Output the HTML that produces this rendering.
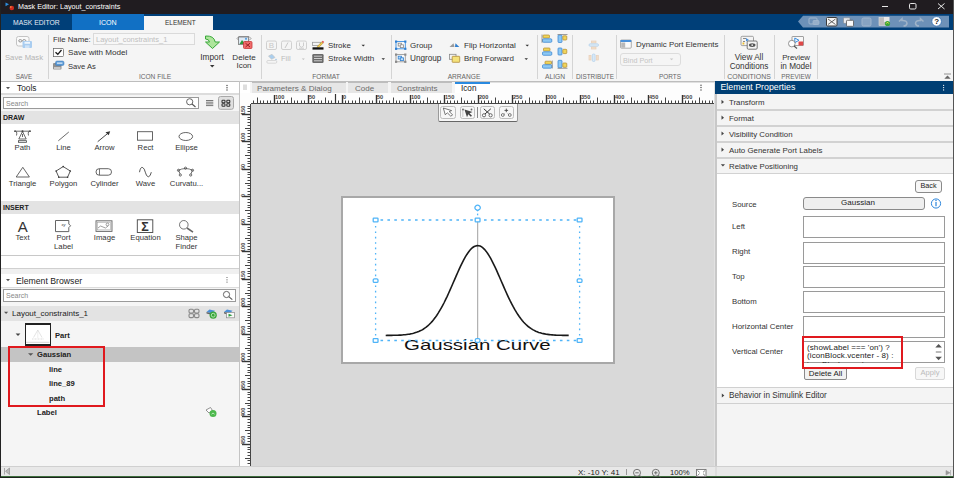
<!DOCTYPE html>
<html><head><meta charset="utf-8">
<style>
*{margin:0;padding:0;box-sizing:border-box}
html,body{width:954px;height:478px;overflow:hidden;background:#f5f5f5;font-family:"Liberation Sans",sans-serif;color:#333}
.a{position:absolute}
.t{position:absolute;white-space:nowrap;line-height:10px;height:10px;font-size:8px;margin-top:1px}
svg{position:absolute;overflow:visible}
</style></head><body>
<!-- window frame -->
<div class="a" style="left:0;top:0;width:954px;height:478px;background:#f5f5f5"></div>
<!-- title bar -->
<div class="a" style="left:0;top:0;width:954px;height:14px;background:#201c20"></div>
<div class="t" style="left:18px;top:1.5px;color:#fff;font-size:7.2px;margin-top:0">Mask Editor: Layout_constraints</div>
<!-- tab bar -->
<div class="a" style="left:0;top:14px;width:954px;height:16px;background:#003f78"></div>
<div class="a" style="left:72px;top:14px;width:72px;height:16px;background:#1170c4"></div>
<div class="a" style="left:144px;top:16px;width:69px;height:14px;background:#f5f5f5"></div>
<div class="t" style="left:13px;top:17px;color:#e8eef5;font-size:6.8px">MASK EDITOR</div>
<div class="t" style="left:99px;top:17px;color:#fff;font-size:7.1px">ICON</div>
<div class="t" style="left:165px;top:17px;color:#333;font-size:6.5px">ELEMENT</div>

<!-- toolbar -->
<div class="a" style="left:0;top:30px;width:954px;height:51px;background:#f5f5f5"></div>
<div class="a" style="left:0;top:81px;width:954px;height:1px;background:#bdbdbd"></div>


<!-- toolbar content -->
<!-- separators -->
<div class="a" style="left:48px;top:35px;width:1px;height:44px;background:#d4d4d4"></div>
<div class="a" style="left:261px;top:35px;width:1px;height:44px;background:#d4d4d4"></div>
<div class="a" style="left:391px;top:35px;width:1px;height:44px;background:#d4d4d4"></div>
<div class="a" style="left:537px;top:35px;width:1px;height:44px;background:#d4d4d4"></div>
<div class="a" style="left:572px;top:35px;width:1px;height:44px;background:#d4d4d4"></div>
<div class="a" style="left:616px;top:35px;width:1px;height:44px;background:#d4d4d4"></div>
<div class="a" style="left:724px;top:35px;width:1px;height:44px;background:#d4d4d4"></div>
<div class="a" style="left:774px;top:35px;width:1px;height:44px;background:#d4d4d4"></div>
<div class="a" style="left:817px;top:35px;width:1px;height:44px;background:#d4d4d4"></div>
<!-- section labels -->
<div class="t" style="left:4px;width:40px;text-align:center;top:72px;font-size:6.3px;color:#666;margin-top:0">SAVE</div>
<div class="t" style="left:125px;width:60px;text-align:center;top:72px;font-size:6.6px;color:#666;margin-top:0">ICON FILE</div>
<div class="t" style="left:296px;width:60px;text-align:center;top:72px;font-size:6.7px;color:#666;margin-top:0">FORMAT</div>
<div class="t" style="left:434px;width:60px;text-align:center;top:72px;font-size:6.6px;color:#666;margin-top:0">ARRANGE</div>
<div class="t" style="left:535px;width:40px;text-align:center;top:72px;font-size:6.7px;color:#666;margin-top:0">ALIGN</div>
<div class="t" style="left:570px;width:50px;text-align:center;top:72px;font-size:6.4px;color:#666;margin-top:0">DISTRIBUTE</div>
<div class="t" style="left:640px;width:60px;text-align:center;top:72px;font-size:6.4px;color:#666;margin-top:0">PORTS</div>
<div class="t" style="left:724px;width:50px;text-align:center;top:72px;font-size:6.95px;color:#666;margin-top:0">CONDITIONS</div>
<div class="t" style="left:776px;width:40px;text-align:center;top:72px;font-size:6.4px;color:#666;margin-top:0">PREVIEW</div>

<!-- SAVE -->
<div class="t" style="left:4px;width:40px;text-align:center;top:52.5px;color:#b4b4b4;font-size:7.7px;margin-top:0">Save Mask</div>
<!-- ICON FILE -->
<div class="t" style="left:53px;top:34px;font-size:7.8px">File Name:</div>
<div class="a" style="left:93px;top:33px;width:102px;height:12px;border:1px solid #dadada;background:#f7f7f7"></div>
<div class="t" style="left:96px;top:34px;font-size:7.5px;color:#c0c0c0">Layout_constraints_1</div>
<div class="a" style="left:53px;top:48px;width:10px;height:9px;border:1px solid #555;background:#fff"></div>
<div class="t" style="left:68px;top:47px;font-size:8.1px">Save with Model</div>
<div class="t" style="left:68px;top:61px;font-size:7.6px">Save As</div>
<!-- import/delete -->
<div class="t" style="left:192px;width:40px;text-align:center;top:52px;font-size:8.3px;margin-top:0">Import</div>
<div class="t" style="left:224px;width:40px;text-align:center;top:52.5px;font-size:8.1px;margin-top:0">Delete</div>
<div class="t" style="left:224px;width:40px;text-align:center;top:61px;font-size:8px;margin-top:0">Icon</div>
<!-- FORMAT -->
<div class="t" style="left:281px;top:54.3px;font-size:7.5px;color:#bbb;margin-top:0">Fill</div>
<div class="t" style="left:328px;top:41.3px;font-size:7.9px;margin-top:0">Stroke</div>
<div class="t" style="left:328px;top:54.3px;font-size:8.1px;margin-top:0">Stroke Width</div>
<!-- ARRANGE -->
<div class="t" style="left:410px;top:41.3px;font-size:8px;margin-top:0">Group</div>
<div class="t" style="left:410px;top:54.3px;font-size:8.2px;margin-top:0">Ungroup</div>
<div class="t" style="left:464px;top:41.3px;font-size:8.1px;margin-top:0">Flip Horizontal</div>
<div class="t" style="left:464px;top:54.3px;font-size:7.96px;margin-top:0">Bring Forward</div>
<!-- PORTS -->
<div class="t" style="left:636px;top:39px;font-size:7.9px">Dynamic Port Elements</div>
<div class="a" style="left:620px;top:53px;width:61px;height:13px;border:1px solid #dcdcdc;border-radius:3px;background:#f5f5f5"></div>
<div class="t" style="left:623px;top:54.5px;font-size:7.2px;color:#c4c4c4">Bind Port</div>
<!-- CONDITIONS / PREVIEW -->
<div class="t" style="left:724px;width:50px;text-align:center;top:52px;font-size:8.2px">View All</div>
<div class="t" style="left:724px;width:50px;text-align:center;top:61px;font-size:8.2px">Conditions</div>
<div class="t" style="left:776px;width:40px;text-align:center;top:52px;font-size:7.8px">Preview</div>
<div class="t" style="left:776px;width:40px;text-align:center;top:61px;font-size:8.2px">in Model</div>


<!-- left panel -->
<div class="a" style="left:1px;top:82px;width:238px;height:11px;background:#fff"></div>
<div class="a" style="left:1px;top:93px;width:238px;height:2px;background:#dcdcdc"></div>
<div class="t" style="left:17px;top:83px;font-size:8.3px;color:#222;margin-top:0">Tools</div>
<div class="a" style="left:1px;top:95px;width:238px;height:16px;background:#f5f5f5"></div>
<div class="a" style="left:3px;top:97px;width:196px;height:12px;border:1px solid #9a9a9a;background:#fff"></div>
<div class="t" style="left:6px;top:98px;font-size:7px;color:#888">Search</div>
<div class="a" style="left:1px;top:111px;width:238px;height:13px;background:#e3e3e3"></div>
<div class="t" style="left:3px;top:112px;font-size:7px;font-weight:bold;color:#222">DRAW</div>
<div class="a" style="left:1px;top:124px;width:238px;height:77px;background:#fff"></div>
<div class="a" style="left:1px;top:201px;width:238px;height:13px;background:#e3e3e3"></div>
<div class="t" style="left:3px;top:202px;font-size:7px;font-weight:bold;color:#222">INSERT</div>
<div class="a" style="left:1px;top:214px;width:238px;height:41px;background:#fff"></div>
<div class="a" style="left:1px;top:255px;width:238px;height:1px;background:#c8c8c8"></div>
<div class="a" style="left:1px;top:256px;width:238px;height:12px;background:#fff"></div>
<div class="a" style="left:1px;top:268px;width:238px;height:1px;background:#d0d0d0"></div>
<div class="a" style="left:1px;top:269px;width:238px;height:5px;background:#f0f0f0"></div>
<div class="a" style="left:1px;top:274px;width:238px;height:13px;background:#fff"></div>
<div class="a" style="left:1px;top:287px;width:238px;height:1px;background:#dcdcdc"></div>
<div class="t" style="left:16px;top:275px;font-size:8.7px;color:#222">Element Browser</div>
<!-- tool labels -->
<div class="t" style="left:2px;width:41px;text-align:center;top:143px;font-size:7.7px;margin-top:0">Path</div>
<div class="t" style="left:43px;width:41px;text-align:center;top:143px;font-size:7.7px;margin-top:0">Line</div>
<div class="t" style="left:84px;width:41px;text-align:center;top:143px;font-size:7.7px;margin-top:0">Arrow</div>
<div class="t" style="left:125px;width:41px;text-align:center;top:143px;font-size:7.7px;margin-top:0">Rect</div>
<div class="t" style="left:166px;width:41px;text-align:center;top:143px;font-size:7.7px;margin-top:0">Ellipse</div>
<div class="t" style="left:2px;width:41px;text-align:center;top:179px;font-size:7.7px;margin-top:0">Triangle</div>
<div class="t" style="left:43px;width:41px;text-align:center;top:179px;font-size:7.7px;margin-top:0">Polygon</div>
<div class="t" style="left:84px;width:41px;text-align:center;top:179px;font-size:7.7px;margin-top:0">Cylinder</div>
<div class="t" style="left:125px;width:41px;text-align:center;top:179px;font-size:7.7px;margin-top:0">Wave</div>
<div class="t" style="left:166px;width:41px;text-align:center;top:179px;font-size:7.7px;margin-top:0">Curvatu...</div>
<div class="t" style="left:2px;width:41px;text-align:center;top:232.7px;font-size:7.7px;margin-top:0">Text</div>
<div class="t" style="left:43px;width:41px;text-align:center;top:232.7px;font-size:7.7px;margin-top:0">Port</div>
<div class="t" style="left:43px;width:41px;text-align:center;top:242px;font-size:7.7px;margin-top:0">Label</div>
<div class="t" style="left:84px;width:41px;text-align:center;top:232.7px;font-size:7.7px;margin-top:0">Image</div>
<div class="t" style="left:125px;width:41px;text-align:center;top:232.7px;font-size:7.7px;margin-top:0">Equation</div>
<div class="t" style="left:166px;width:41px;text-align:center;top:232.7px;font-size:7.7px;margin-top:0">Shape</div>
<div class="t" style="left:166px;width:41px;text-align:center;top:242px;font-size:7.7px;margin-top:0">Finder</div>
<!-- element browser -->
<div class="a" style="left:1px;top:288px;width:238px;height:178px;background:#f5f5f5"></div>
<div class="a" style="left:3px;top:289px;width:233px;height:13px;border:1px solid #9a9a9a;background:#fff"></div>
<div class="t" style="left:6px;top:290px;font-size:7px;color:#888">Search</div>
<div class="a" style="left:1px;top:306px;width:238px;height:15px;background:#e3e3e3"></div>
<div class="t" style="left:12px;top:308.5px;font-size:8px;color:#222;margin-top:0">Layout_constraints_1</div>
<div class="a" style="left:24.5px;top:323.3px;width:26.5px;height:22.3px;border:1.5px solid #222;border-top-width:2px;border-bottom-width:2px;background:#fff"></div>
<div class="t" style="left:55px;top:330.5px;font-size:7.6px;font-weight:bold;color:#222;margin-top:0">Part</div>
<div class="a" style="left:1px;top:347px;width:238px;height:15px;background:#c4c4c4"></div>
<div class="t" style="left:37px;top:350px;font-size:7.6px;font-weight:bold;color:#222;margin-top:0">Gaussian</div>
<div class="t" style="left:49px;top:365px;font-size:7.6px;font-weight:bold;color:#222;margin-top:0">line</div>
<div class="t" style="left:49px;top:379px;font-size:7.6px;font-weight:bold;color:#222;margin-top:0">line_89</div>
<div class="t" style="left:49px;top:394px;font-size:7.6px;font-weight:bold;color:#222;margin-top:0">path</div>
<div class="t" style="left:37px;top:408px;font-size:7.6px;font-weight:bold;color:#222;margin-top:0">Label</div>
<div class="a" style="left:8px;top:345.5px;width:96.5px;height:61.5px;border:2px solid #e0191e"></div>
<div class="a" style="left:239px;top:81px;width:1px;height:385px;background:#c4c4c4"></div>



<!-- center -->
<div class="a" style="left:240px;top:82px;width:476px;height:384px;background:#d9d9d9"></div>
<div class="a" style="left:240px;top:82px;width:476px;height:11px;background:#f5f5f5"></div>
<div class="a" style="left:240px;top:93px;width:476px;height:11px;background:#fdfdfd"></div>
<div class="a" style="left:240px;top:104px;width:11px;height:362px;background:#fdfdfd"></div>
<div class="a" style="left:252px;top:82px;width:94px;height:11px;background:#e6e6e6;border-top:1px solid #bdbdbd"></div>
<div class="a" style="left:348px;top:82px;width:40px;height:11px;background:#e6e6e6;border-top:1px solid #bdbdbd"></div>
<div class="a" style="left:391px;top:82px;width:61px;height:11px;background:#e6e6e6;border-top:1px solid #bdbdbd"></div>
<div class="a" style="left:490px;top:82px;width:226px;height:11px;background:#fdfdfd;border-top:1px solid #e0e0e0"></div>
<div class="a" style="left:455px;top:82px;width:35px;height:11px;background:#fff;border-top:2px solid #2a8ae0"></div>
<div class="t" style="left:257px;top:83px;font-size:8.1px;color:#6a6a6a">Parameters &amp; Dialog</div>
<div class="t" style="left:355px;top:83px;font-size:8px;color:#6a6a6a">Code</div>
<div class="t" style="left:397px;top:83px;font-size:8px;color:#6a6a6a">Constraints</div>
<div class="t" style="left:461px;top:83px;font-size:8.2px;color:#222">Icon</div>
<svg class="a" style="left:0;top:0" width="954" height="478"><g stroke="#444" stroke-width="1"><line x1="253.5" y1="100.5" x2="253.5" y2="103.5"/><line x1="257.5" y1="97.5" x2="257.5" y2="103.5"/><line x1="260.5" y1="100.5" x2="260.5" y2="103.5"/><line x1="263.5" y1="100.5" x2="263.5" y2="103.5"/><line x1="267.5" y1="100.5" x2="267.5" y2="103.5"/><line x1="270.5" y1="100.5" x2="270.5" y2="103.5"/><line x1="274.5" y1="95" x2="274.5" y2="103.5" stroke-width="1.4" stroke="#333"/><line x1="277.5" y1="100.5" x2="277.5" y2="103.5"/><line x1="280.5" y1="100.5" x2="280.5" y2="103.5"/><line x1="284.5" y1="100.5" x2="284.5" y2="103.5"/><line x1="287.5" y1="100.5" x2="287.5" y2="103.5"/><line x1="291.5" y1="97.5" x2="291.5" y2="103.5"/><line x1="294.5" y1="100.5" x2="294.5" y2="103.5"/><line x1="297.5" y1="100.5" x2="297.5" y2="103.5"/><line x1="301.5" y1="100.5" x2="301.5" y2="103.5"/><line x1="304.5" y1="100.5" x2="304.5" y2="103.5"/><line x1="308.5" y1="95" x2="308.5" y2="103.5" stroke-width="1.4" stroke="#333"/><line x1="311.5" y1="100.5" x2="311.5" y2="103.5"/><line x1="314.5" y1="100.5" x2="314.5" y2="103.5"/><line x1="318.5" y1="100.5" x2="318.5" y2="103.5"/><line x1="321.5" y1="100.5" x2="321.5" y2="103.5"/><line x1="325.5" y1="97.5" x2="325.5" y2="103.5"/><line x1="328.5" y1="100.5" x2="328.5" y2="103.5"/><line x1="331.5" y1="100.5" x2="331.5" y2="103.5"/><line x1="335.5" y1="100.5" x2="335.5" y2="103.5"/><line x1="338.5" y1="100.5" x2="338.5" y2="103.5"/><line x1="342.5" y1="95" x2="342.5" y2="103.5" stroke-width="1.4" stroke="#333"/><line x1="345.5" y1="100.5" x2="345.5" y2="103.5"/><line x1="348.5" y1="100.5" x2="348.5" y2="103.5"/><line x1="352.5" y1="100.5" x2="352.5" y2="103.5"/><line x1="355.5" y1="100.5" x2="355.5" y2="103.5"/><line x1="359.5" y1="97.5" x2="359.5" y2="103.5"/><line x1="362.5" y1="100.5" x2="362.5" y2="103.5"/><line x1="365.5" y1="100.5" x2="365.5" y2="103.5"/><line x1="369.5" y1="100.5" x2="369.5" y2="103.5"/><line x1="372.5" y1="100.5" x2="372.5" y2="103.5"/><line x1="376.5" y1="95" x2="376.5" y2="103.5" stroke-width="1.4" stroke="#333"/><line x1="379.5" y1="100.5" x2="379.5" y2="103.5"/><line x1="382.5" y1="100.5" x2="382.5" y2="103.5"/><line x1="386.5" y1="100.5" x2="386.5" y2="103.5"/><line x1="389.5" y1="100.5" x2="389.5" y2="103.5"/><line x1="393.5" y1="97.5" x2="393.5" y2="103.5"/><line x1="396.5" y1="100.5" x2="396.5" y2="103.5"/><line x1="399.5" y1="100.5" x2="399.5" y2="103.5"/><line x1="403.5" y1="100.5" x2="403.5" y2="103.5"/><line x1="406.5" y1="100.5" x2="406.5" y2="103.5"/><line x1="410.5" y1="95" x2="410.5" y2="103.5" stroke-width="1.4" stroke="#333"/><line x1="413.5" y1="100.5" x2="413.5" y2="103.5"/><line x1="416.5" y1="100.5" x2="416.5" y2="103.5"/><line x1="420.5" y1="100.5" x2="420.5" y2="103.5"/><line x1="423.5" y1="100.5" x2="423.5" y2="103.5"/><line x1="427.5" y1="97.5" x2="427.5" y2="103.5"/><line x1="430.5" y1="100.5" x2="430.5" y2="103.5"/><line x1="433.5" y1="100.5" x2="433.5" y2="103.5"/><line x1="437.5" y1="100.5" x2="437.5" y2="103.5"/><line x1="440.5" y1="100.5" x2="440.5" y2="103.5"/><line x1="444.5" y1="95" x2="444.5" y2="103.5" stroke-width="1.4" stroke="#333"/><line x1="447.5" y1="100.5" x2="447.5" y2="103.5"/><line x1="450.5" y1="100.5" x2="450.5" y2="103.5"/><line x1="454.5" y1="100.5" x2="454.5" y2="103.5"/><line x1="457.5" y1="100.5" x2="457.5" y2="103.5"/><line x1="461.5" y1="97.5" x2="461.5" y2="103.5"/><line x1="464.5" y1="100.5" x2="464.5" y2="103.5"/><line x1="467.5" y1="100.5" x2="467.5" y2="103.5"/><line x1="471.5" y1="100.5" x2="471.5" y2="103.5"/><line x1="474.5" y1="100.5" x2="474.5" y2="103.5"/><line x1="478.5" y1="95" x2="478.5" y2="103.5" stroke-width="1.4" stroke="#333"/><line x1="481.5" y1="100.5" x2="481.5" y2="103.5"/><line x1="484.5" y1="100.5" x2="484.5" y2="103.5"/><line x1="488.5" y1="100.5" x2="488.5" y2="103.5"/><line x1="491.5" y1="100.5" x2="491.5" y2="103.5"/><line x1="495.5" y1="97.5" x2="495.5" y2="103.5"/><line x1="498.5" y1="100.5" x2="498.5" y2="103.5"/><line x1="501.5" y1="100.5" x2="501.5" y2="103.5"/><line x1="505.5" y1="100.5" x2="505.5" y2="103.5"/><line x1="508.5" y1="100.5" x2="508.5" y2="103.5"/><line x1="512.5" y1="95" x2="512.5" y2="103.5" stroke-width="1.4" stroke="#333"/><line x1="515.5" y1="100.5" x2="515.5" y2="103.5"/><line x1="518.5" y1="100.5" x2="518.5" y2="103.5"/><line x1="522.5" y1="100.5" x2="522.5" y2="103.5"/><line x1="525.5" y1="100.5" x2="525.5" y2="103.5"/><line x1="529.5" y1="97.5" x2="529.5" y2="103.5"/><line x1="532.5" y1="100.5" x2="532.5" y2="103.5"/><line x1="535.5" y1="100.5" x2="535.5" y2="103.5"/><line x1="539.5" y1="100.5" x2="539.5" y2="103.5"/><line x1="542.5" y1="100.5" x2="542.5" y2="103.5"/><line x1="546.5" y1="95" x2="546.5" y2="103.5" stroke-width="1.4" stroke="#333"/><line x1="549.5" y1="100.5" x2="549.5" y2="103.5"/><line x1="552.5" y1="100.5" x2="552.5" y2="103.5"/><line x1="556.5" y1="100.5" x2="556.5" y2="103.5"/><line x1="559.5" y1="100.5" x2="559.5" y2="103.5"/><line x1="563.5" y1="97.5" x2="563.5" y2="103.5"/><line x1="566.5" y1="100.5" x2="566.5" y2="103.5"/><line x1="569.5" y1="100.5" x2="569.5" y2="103.5"/><line x1="573.5" y1="100.5" x2="573.5" y2="103.5"/><line x1="576.5" y1="100.5" x2="576.5" y2="103.5"/><line x1="580.5" y1="95" x2="580.5" y2="103.5" stroke-width="1.4" stroke="#333"/><line x1="583.5" y1="100.5" x2="583.5" y2="103.5"/><line x1="586.5" y1="100.5" x2="586.5" y2="103.5"/><line x1="590.5" y1="100.5" x2="590.5" y2="103.5"/><line x1="593.5" y1="100.5" x2="593.5" y2="103.5"/><line x1="597.5" y1="97.5" x2="597.5" y2="103.5"/><line x1="600.5" y1="100.5" x2="600.5" y2="103.5"/><line x1="603.5" y1="100.5" x2="603.5" y2="103.5"/><line x1="607.5" y1="100.5" x2="607.5" y2="103.5"/><line x1="610.5" y1="100.5" x2="610.5" y2="103.5"/><line x1="614.5" y1="95" x2="614.5" y2="103.5" stroke-width="1.4" stroke="#333"/><line x1="617.5" y1="100.5" x2="617.5" y2="103.5"/><line x1="620.5" y1="100.5" x2="620.5" y2="103.5"/><line x1="624.5" y1="100.5" x2="624.5" y2="103.5"/><line x1="627.5" y1="100.5" x2="627.5" y2="103.5"/><line x1="631.5" y1="97.5" x2="631.5" y2="103.5"/><line x1="634.5" y1="100.5" x2="634.5" y2="103.5"/><line x1="637.5" y1="100.5" x2="637.5" y2="103.5"/><line x1="641.5" y1="100.5" x2="641.5" y2="103.5"/><line x1="644.5" y1="100.5" x2="644.5" y2="103.5"/><line x1="648.5" y1="95" x2="648.5" y2="103.5" stroke-width="1.4" stroke="#333"/><line x1="651.5" y1="100.5" x2="651.5" y2="103.5"/><line x1="654.5" y1="100.5" x2="654.5" y2="103.5"/><line x1="658.5" y1="100.5" x2="658.5" y2="103.5"/><line x1="661.5" y1="100.5" x2="661.5" y2="103.5"/><line x1="665.5" y1="97.5" x2="665.5" y2="103.5"/><line x1="668.5" y1="100.5" x2="668.5" y2="103.5"/><line x1="671.5" y1="100.5" x2="671.5" y2="103.5"/><line x1="675.5" y1="100.5" x2="675.5" y2="103.5"/><line x1="678.5" y1="100.5" x2="678.5" y2="103.5"/><line x1="682.5" y1="95" x2="682.5" y2="103.5" stroke-width="1.4" stroke="#333"/><line x1="685.5" y1="100.5" x2="685.5" y2="103.5"/><line x1="688.5" y1="100.5" x2="688.5" y2="103.5"/><line x1="692.5" y1="100.5" x2="692.5" y2="103.5"/><line x1="695.5" y1="100.5" x2="695.5" y2="103.5"/><line x1="699.5" y1="97.5" x2="699.5" y2="103.5"/><line x1="702.5" y1="100.5" x2="702.5" y2="103.5"/><line x1="705.5" y1="100.5" x2="705.5" y2="103.5"/><line x1="709.5" y1="100.5" x2="709.5" y2="103.5"/><line x1="712.5" y1="100.5" x2="712.5" y2="103.5"/><line x1="716.5" y1="95" x2="716.5" y2="103.5" stroke-width="1.4" stroke="#333"/><line x1="251" y1="103.5" x2="716" y2="103.5"/></g><g font-family="Liberation Sans" font-size="5.6" font-weight="bold" fill="#444"><text x="275" y="99">100</text><text x="309" y="99">50</text><text x="343" y="99">0</text><text x="377" y="99">50</text><text x="411" y="99">100</text><text x="445" y="99">150</text><text x="479" y="99">200</text><text x="513" y="99">250</text><text x="547" y="99">300</text><text x="581" y="99">350</text><text x="615" y="99">400</text><text x="649" y="99">450</text><text x="683" y="99">500</text></g><g stroke="#444" stroke-width="1"><line x1="247.5" y1="106.5" x2="250.5" y2="106.5"/><line x1="247.5" y1="108.5" x2="250.5" y2="108.5"/><line x1="247.5" y1="111.5" x2="250.5" y2="111.5"/><line x1="242" y1="114.5" x2="250.5" y2="114.5" stroke-width="1.4" stroke="#333"/><line x1="247.5" y1="117.5" x2="250.5" y2="117.5"/><line x1="247.5" y1="119.5" x2="250.5" y2="119.5"/><line x1="247.5" y1="122.5" x2="250.5" y2="122.5"/><line x1="247.5" y1="125.5" x2="250.5" y2="125.5"/><line x1="245" y1="128.5" x2="250.5" y2="128.5"/><line x1="247.5" y1="130.5" x2="250.5" y2="130.5"/><line x1="247.5" y1="133.5" x2="250.5" y2="133.5"/><line x1="247.5" y1="136.5" x2="250.5" y2="136.5"/><line x1="247.5" y1="139.5" x2="250.5" y2="139.5"/><line x1="242" y1="141.5" x2="250.5" y2="141.5" stroke-width="1.4" stroke="#333"/><line x1="247.5" y1="144.5" x2="250.5" y2="144.5"/><line x1="247.5" y1="147.5" x2="250.5" y2="147.5"/><line x1="247.5" y1="150.5" x2="250.5" y2="150.5"/><line x1="247.5" y1="152.5" x2="250.5" y2="152.5"/><line x1="245" y1="155.5" x2="250.5" y2="155.5"/><line x1="247.5" y1="158.5" x2="250.5" y2="158.5"/><line x1="247.5" y1="161.5" x2="250.5" y2="161.5"/><line x1="247.5" y1="163.5" x2="250.5" y2="163.5"/><line x1="247.5" y1="166.5" x2="250.5" y2="166.5"/><line x1="242" y1="169.5" x2="250.5" y2="169.5" stroke-width="1.4" stroke="#333"/><line x1="247.5" y1="172.5" x2="250.5" y2="172.5"/><line x1="247.5" y1="174.5" x2="250.5" y2="174.5"/><line x1="247.5" y1="177.5" x2="250.5" y2="177.5"/><line x1="247.5" y1="180.5" x2="250.5" y2="180.5"/><line x1="245" y1="183.5" x2="250.5" y2="183.5"/><line x1="247.5" y1="185.5" x2="250.5" y2="185.5"/><line x1="247.5" y1="188.5" x2="250.5" y2="188.5"/><line x1="247.5" y1="191.5" x2="250.5" y2="191.5"/><line x1="247.5" y1="194.5" x2="250.5" y2="194.5"/><line x1="242" y1="196.5" x2="250.5" y2="196.5" stroke-width="1.4" stroke="#333"/><line x1="247.5" y1="199.5" x2="250.5" y2="199.5"/><line x1="247.5" y1="202.5" x2="250.5" y2="202.5"/><line x1="247.5" y1="205.5" x2="250.5" y2="205.5"/><line x1="247.5" y1="207.5" x2="250.5" y2="207.5"/><line x1="245" y1="210.5" x2="250.5" y2="210.5"/><line x1="247.5" y1="213.5" x2="250.5" y2="213.5"/><line x1="247.5" y1="216.5" x2="250.5" y2="216.5"/><line x1="247.5" y1="218.5" x2="250.5" y2="218.5"/><line x1="247.5" y1="221.5" x2="250.5" y2="221.5"/><line x1="242" y1="224.5" x2="250.5" y2="224.5" stroke-width="1.4" stroke="#333"/><line x1="247.5" y1="227.5" x2="250.5" y2="227.5"/><line x1="247.5" y1="229.5" x2="250.5" y2="229.5"/><line x1="247.5" y1="232.5" x2="250.5" y2="232.5"/><line x1="247.5" y1="235.5" x2="250.5" y2="235.5"/><line x1="245" y1="238.5" x2="250.5" y2="238.5"/><line x1="247.5" y1="240.5" x2="250.5" y2="240.5"/><line x1="247.5" y1="243.5" x2="250.5" y2="243.5"/><line x1="247.5" y1="246.5" x2="250.5" y2="246.5"/><line x1="247.5" y1="249.5" x2="250.5" y2="249.5"/><line x1="242" y1="251.5" x2="250.5" y2="251.5" stroke-width="1.4" stroke="#333"/><line x1="247.5" y1="254.5" x2="250.5" y2="254.5"/><line x1="247.5" y1="257.5" x2="250.5" y2="257.5"/><line x1="247.5" y1="260.5" x2="250.5" y2="260.5"/><line x1="247.5" y1="262.5" x2="250.5" y2="262.5"/><line x1="245" y1="265.5" x2="250.5" y2="265.5"/><line x1="247.5" y1="268.5" x2="250.5" y2="268.5"/><line x1="247.5" y1="271.5" x2="250.5" y2="271.5"/><line x1="247.5" y1="273.5" x2="250.5" y2="273.5"/><line x1="247.5" y1="276.5" x2="250.5" y2="276.5"/><line x1="242" y1="279.5" x2="250.5" y2="279.5" stroke-width="1.4" stroke="#333"/><line x1="247.5" y1="282.5" x2="250.5" y2="282.5"/><line x1="247.5" y1="284.5" x2="250.5" y2="284.5"/><line x1="247.5" y1="287.5" x2="250.5" y2="287.5"/><line x1="247.5" y1="290.5" x2="250.5" y2="290.5"/><line x1="245" y1="293.5" x2="250.5" y2="293.5"/><line x1="247.5" y1="295.5" x2="250.5" y2="295.5"/><line x1="247.5" y1="298.5" x2="250.5" y2="298.5"/><line x1="247.5" y1="301.5" x2="250.5" y2="301.5"/><line x1="247.5" y1="304.5" x2="250.5" y2="304.5"/><line x1="242" y1="306.5" x2="250.5" y2="306.5" stroke-width="1.4" stroke="#333"/><line x1="247.5" y1="309.5" x2="250.5" y2="309.5"/><line x1="247.5" y1="312.5" x2="250.5" y2="312.5"/><line x1="247.5" y1="315.5" x2="250.5" y2="315.5"/><line x1="247.5" y1="317.5" x2="250.5" y2="317.5"/><line x1="245" y1="320.5" x2="250.5" y2="320.5"/><line x1="247.5" y1="323.5" x2="250.5" y2="323.5"/><line x1="247.5" y1="326.5" x2="250.5" y2="326.5"/><line x1="247.5" y1="328.5" x2="250.5" y2="328.5"/><line x1="247.5" y1="331.5" x2="250.5" y2="331.5"/><line x1="242" y1="334.5" x2="250.5" y2="334.5" stroke-width="1.4" stroke="#333"/><line x1="247.5" y1="337.5" x2="250.5" y2="337.5"/><line x1="247.5" y1="339.5" x2="250.5" y2="339.5"/><line x1="247.5" y1="342.5" x2="250.5" y2="342.5"/><line x1="247.5" y1="345.5" x2="250.5" y2="345.5"/><line x1="245" y1="348.5" x2="250.5" y2="348.5"/><line x1="247.5" y1="350.5" x2="250.5" y2="350.5"/><line x1="247.5" y1="353.5" x2="250.5" y2="353.5"/><line x1="247.5" y1="356.5" x2="250.5" y2="356.5"/><line x1="247.5" y1="359.5" x2="250.5" y2="359.5"/><line x1="242" y1="361.5" x2="250.5" y2="361.5" stroke-width="1.4" stroke="#333"/><line x1="247.5" y1="364.5" x2="250.5" y2="364.5"/><line x1="247.5" y1="367.5" x2="250.5" y2="367.5"/><line x1="247.5" y1="370.5" x2="250.5" y2="370.5"/><line x1="247.5" y1="372.5" x2="250.5" y2="372.5"/><line x1="245" y1="375.5" x2="250.5" y2="375.5"/><line x1="247.5" y1="378.5" x2="250.5" y2="378.5"/><line x1="247.5" y1="381.5" x2="250.5" y2="381.5"/><line x1="247.5" y1="383.5" x2="250.5" y2="383.5"/><line x1="247.5" y1="386.5" x2="250.5" y2="386.5"/><line x1="242" y1="389.5" x2="250.5" y2="389.5" stroke-width="1.4" stroke="#333"/><line x1="247.5" y1="392.5" x2="250.5" y2="392.5"/><line x1="247.5" y1="394.5" x2="250.5" y2="394.5"/><line x1="247.5" y1="397.5" x2="250.5" y2="397.5"/><line x1="247.5" y1="400.5" x2="250.5" y2="400.5"/><line x1="245" y1="403.5" x2="250.5" y2="403.5"/><line x1="247.5" y1="405.5" x2="250.5" y2="405.5"/><line x1="247.5" y1="408.5" x2="250.5" y2="408.5"/><line x1="247.5" y1="411.5" x2="250.5" y2="411.5"/><line x1="247.5" y1="414.5" x2="250.5" y2="414.5"/><line x1="242" y1="416.5" x2="250.5" y2="416.5" stroke-width="1.4" stroke="#333"/><line x1="247.5" y1="419.5" x2="250.5" y2="419.5"/><line x1="247.5" y1="422.5" x2="250.5" y2="422.5"/><line x1="247.5" y1="425.5" x2="250.5" y2="425.5"/><line x1="247.5" y1="427.5" x2="250.5" y2="427.5"/><line x1="245" y1="430.5" x2="250.5" y2="430.5"/><line x1="247.5" y1="433.5" x2="250.5" y2="433.5"/><line x1="247.5" y1="436.5" x2="250.5" y2="436.5"/><line x1="247.5" y1="438.5" x2="250.5" y2="438.5"/><line x1="247.5" y1="441.5" x2="250.5" y2="441.5"/><line x1="242" y1="444.5" x2="250.5" y2="444.5" stroke-width="1.4" stroke="#333"/><line x1="247.5" y1="447.5" x2="250.5" y2="447.5"/><line x1="247.5" y1="449.5" x2="250.5" y2="449.5"/><line x1="247.5" y1="452.5" x2="250.5" y2="452.5"/><line x1="247.5" y1="455.5" x2="250.5" y2="455.5"/><line x1="245" y1="458.5" x2="250.5" y2="458.5"/><line x1="247.5" y1="460.5" x2="250.5" y2="460.5"/><line x1="247.5" y1="463.5" x2="250.5" y2="463.5"/><line x1="247.5" y1="466.5" x2="250.5" y2="466.5"/><line x1="250.5" y1="104" x2="250.5" y2="466"/></g><g font-family="Liberation Sans" font-size="5.6" font-weight="bold" fill="#444"><text transform="translate(245,115) rotate(-90)">150</text><text transform="translate(245,142) rotate(-90)">100</text><text transform="translate(245,170) rotate(-90)">50</text><text transform="translate(245,197) rotate(-90)">0</text><text transform="translate(245,225) rotate(-90)">50</text><text transform="translate(245,252) rotate(-90)">100</text><text transform="translate(245,280) rotate(-90)">150</text><text transform="translate(245,307) rotate(-90)">200</text><text transform="translate(245,335) rotate(-90)">250</text><text transform="translate(245,362) rotate(-90)">300</text><text transform="translate(245,390) rotate(-90)">350</text><text transform="translate(245,417) rotate(-90)">400</text><text transform="translate(245,445) rotate(-90)">450</text></g></svg>
<!-- floating toolbar -->
<div class="a" style="left:438px;top:103.5px;width:80px;height:18.5px;background:#f7f7f7;border:1px solid #9a9a9a;border-top:none;border-bottom:1.5px solid #666;border-radius:0 0 2px 2px"></div>
<div class="a" style="left:440px;top:106px;width:16px;height:13px;border:1px solid #bdbdbd;border-radius:2.5px"></div>
<div class="a" style="left:460px;top:106px;width:15px;height:13px;border:1px solid #bdbdbd;border-radius:2.5px"></div>
<div class="a" style="left:477px;top:107px;width:1px;height:11px;background:#888"></div>
<div class="a" style="left:480px;top:106px;width:15px;height:13px;border:1px solid #bdbdbd;border-radius:2.5px"></div>
<div class="a" style="left:499px;top:106px;width:15px;height:13px;border:1px solid #bdbdbd;border-radius:2.5px"></div>
<!-- icon canvas -->
<div class="a" style="left:341px;top:196px;width:274px;height:168px;background:#fff;border:2px solid #a8a8a8"></div>
<svg class="a" style="left:0;top:0" width="954" height="478">
<line x1="477.7" y1="220" x2="477.7" y2="340" stroke="#a0a0a0" stroke-width="1"/>
<path d="M385.7,335.5 L387.2,335.4 L388.7,335.4 L390.2,335.4 L391.7,335.4 L393.2,335.3 L394.7,335.3 L396.2,335.3 L397.7,335.2 L399.2,335.1 L400.7,335.1 L402.2,335.0 L403.7,334.8 L405.2,334.7 L406.7,334.5 L408.2,334.3 L409.7,334.1 L411.2,333.8 L412.7,333.5 L414.2,333.1 L415.7,332.6 L417.2,332.1 L418.7,331.5 L420.2,330.8 L421.7,330.1 L423.2,329.2 L424.7,328.2 L426.2,327.1 L427.7,325.9 L429.2,324.5 L430.7,323.0 L432.2,321.4 L433.7,319.6 L435.2,317.6 L436.7,315.5 L438.2,313.2 L439.7,310.7 L441.2,308.1 L442.7,305.4 L444.2,302.5 L445.7,299.4 L447.2,296.3 L448.7,293.0 L450.2,289.7 L451.7,286.3 L453.2,282.8 L454.7,279.4 L456.2,275.9 L457.7,272.5 L459.2,269.2 L460.7,265.9 L462.2,262.8 L463.7,259.9 L465.2,257.2 L466.7,254.7 L468.2,252.5 L469.7,250.5 L471.2,248.8 L472.7,247.5 L474.2,246.5 L475.7,245.9 L477.2,245.6 L478.7,245.7 L480.2,246.1 L481.7,246.9 L483.2,248.1 L484.7,249.6 L486.2,251.4 L487.7,253.5 L489.2,255.8 L490.7,258.4 L492.2,261.3 L493.7,264.3 L495.2,267.4 L496.7,270.7 L498.2,274.1 L499.7,277.5 L501.2,281.0 L502.7,284.4 L504.2,287.9 L505.7,291.3 L507.2,294.6 L508.7,297.8 L510.2,300.9 L511.7,303.8 L513.2,306.7 L514.7,309.4 L516.2,311.9 L517.7,314.3 L519.2,316.5 L520.7,318.5 L522.2,320.4 L523.7,322.2 L525.2,323.7 L526.7,325.2 L528.2,326.5 L529.7,327.6 L531.2,328.7 L532.7,329.6 L534.2,330.4 L535.7,331.2 L537.2,331.8 L538.7,332.4 L540.2,332.8 L541.7,333.3 L543.2,333.6 L544.7,333.9 L546.2,334.2 L547.7,334.4 L549.2,334.6 L550.7,334.8 L552.2,334.9 L553.7,335.0 L555.2,335.1 L556.7,335.2 L558.2,335.2 L559.7,335.3 L561.2,335.3 L562.7,335.4 L564.2,335.4 L565.7,335.4 L567.2,335.4 L568.7,335.4" fill="none" stroke="#1a1a1a" stroke-width="1.6"/>
</svg>
<div class="t" style="left:404.3px;top:337.3px;font-size:14.3px;line-height:17px;height:17px;color:#111;transform:scaleX(1.43);margin-top:0;transform-origin:0 0">Gaussian Curve</div>
<svg class="a" style="left:0;top:0" width="954" height="478">
<g stroke="#4fb4f8" stroke-width="1.3" fill="none">
<line x1="378.5" y1="220" x2="576.5" y2="220" stroke-dasharray="2.6 4.3" stroke-dashoffset="-2"/>
<line x1="378.5" y1="340.5" x2="576.5" y2="340.5" stroke-dasharray="2.6 4.3" stroke-dashoffset="-2"/>
<line x1="375.6" y1="224" x2="375.6" y2="337" stroke-dasharray="1.6 3.8" stroke-dashoffset="-2"/>
<line x1="579.6" y1="224" x2="579.6" y2="337" stroke-dasharray="1.6 3.8" stroke-dashoffset="-2"/>
<line x1="477.6" y1="213.6" x2="477.6" y2="215.3"/>
</g>
<g stroke="#4fb4f8" stroke-width="1.3" fill="#fff">
<rect x="373.2" y="218.2" width="4.8" height="3.6" rx="0.6"/><rect x="475.2" y="218.2" width="4.8" height="3.6" rx="0.6"/><rect x="577.2" y="218.2" width="4.8" height="3.6" rx="0.6"/>
<rect x="373.2" y="278.8" width="4.8" height="3.6" rx="1.2"/><rect x="577.2" y="278.8" width="4.8" height="3.6" rx="1.2"/>
<rect x="373.2" y="338.7" width="4.8" height="3.6" rx="0.6"/><rect x="475.2" y="338.7" width="4.8" height="3.6" rx="1.6"/><rect x="577.2" y="338.7" width="4.8" height="3.6" rx="0.6"/>
<path d="M477.6,210.6 L475.6,209.3 A2.7,2.4 0 1 1 479.6,209.3 Z"/>
</g>
</svg>



<!-- right panel -->
<div class="a" style="left:716px;top:82px;width:237px;height:384px;background:#f4f4f4"></div>
<div class="a" style="left:714px;top:82px;width:1px;height:384px;background:#e2e2e2"></div><div class="a" style="left:715px;top:82px;width:2px;height:384px;background:#c8c8c8"></div>
<div class="a" style="left:715px;top:81px;width:238px;height:13px;background:#003f74"></div>
<div class="t" style="left:720.5px;top:82.3px;font-size:8.8px;color:#fff;margin-top:0">Element Properties</div>
<div class="a" style="left:717px;top:94px;width:236px;height:80px;background:#f4f4f4"></div>
<div class="a" style="left:717px;top:109px;width:236px;height:1.5px;background:#d2d2d2"></div>
<div class="a" style="left:717px;top:125px;width:236px;height:1.5px;background:#d2d2d2"></div>
<div class="a" style="left:717px;top:141px;width:236px;height:1.5px;background:#d2d2d2"></div>
<div class="a" style="left:717px;top:157px;width:236px;height:1.5px;background:#d2d2d2"></div>
<div class="a" style="left:717px;top:173px;width:236px;height:1.5px;background:#d2d2d2"></div>
<div class="t" style="left:729px;top:97px;font-size:7.85px">Transform</div>
<div class="t" style="left:729px;top:113px;font-size:7.85px">Format</div>
<div class="t" style="left:729px;top:128.5px;font-size:7.85px">Visibility Condition</div>
<div class="t" style="left:729px;top:145px;font-size:7.9px">Auto Generate Port Labels</div>
<div class="t" style="left:729px;top:160.5px;font-size:7.85px">Relative Positioning</div>
<div class="a" style="left:717px;top:174px;width:236px;height:213px;background:#fff"></div>
<div class="a" style="left:915px;top:180px;width:27px;height:13px;border:1px solid #8a8a8a;border-radius:3px;background:#f7f7f7"></div>
<div class="t" style="left:915px;top:181px;width:27px;text-align:center;font-size:7.2px;color:#222;margin-top:0">Back</div>
<div class="t" style="left:732px;top:199.5px;font-size:7.8px;margin-top:0">Source</div>
<div class="a" style="left:803px;top:197px;width:122px;height:13px;border:1px solid #8a8a8a;border-radius:3px;background:#efefef"></div>
<div class="t" style="left:797px;top:197.5px;width:122px;text-align:center;font-size:8px;color:#222;margin-top:0">Gaussian</div>
<div class="a" style="left:803px;top:216px;width:142px;height:22px;border:1px solid #9a9a9a;background:#fff"></div>
<div class="a" style="left:803px;top:241.5px;width:142px;height:22px;border:1px solid #9a9a9a;background:#fff"></div>
<div class="a" style="left:803px;top:266px;width:142px;height:22px;border:1px solid #9a9a9a;background:#fff"></div>
<div class="a" style="left:803px;top:291px;width:142px;height:22px;border:1px solid #9a9a9a;background:#fff"></div>
<div class="a" style="left:803px;top:316px;width:142px;height:22px;border:1px solid #9a9a9a;background:#fff"></div>
<div class="a" style="left:803px;top:341px;width:142px;height:22px;border:1px solid #9a9a9a;background:#fff"></div>
<div class="t" style="left:732px;top:221.5px;font-size:7.8px;margin-top:0">Left</div>
<div class="t" style="left:732px;top:246.5px;font-size:7.8px;margin-top:0">Right</div>
<div class="t" style="left:732px;top:271.5px;font-size:7.8px;margin-top:0">Top</div>
<div class="t" style="left:732px;top:296.5px;font-size:7.8px;margin-top:0">Bottom</div>
<div class="t" style="left:732px;top:321.5px;font-size:7.9px;margin-top:0">Horizontal Center</div>
<div class="t" style="left:732px;top:346.5px;font-size:7.8px;margin-top:0">Vertical Center</div>
<div class="a" style="left:804px;top:342px;width:130px;height:20.5px;overflow:hidden">
<div class="t" style="left:3px;top:1.5px;font-size:8px;color:#222;line-height:8.7px;height:auto;margin-top:0;letter-spacing:0.1px">(showLabel === 'on') ?<br>(iconBlock.vcenter - 8) :<br>iconBlock.vcenter</div>
</div>
<div class="a" style="left:804px;top:367px;width:43px;height:13px;border:1px solid #8a8a8a;border-radius:2px;background:#f2f2f2"></div>
<div class="t" style="left:804px;top:368.8px;width:43px;text-align:center;font-size:7.9px;color:#222;margin-top:0">Delete All</div>
<div class="a" style="left:915px;top:367px;width:30px;height:13px;border:1px solid #d8d8d8;border-radius:2px;background:#f7f7f7"></div>
<div class="t" style="left:915px;top:368px;width:30px;text-align:center;font-size:7.6px;color:#bbb;margin-top:0">Apply</div>
<div class="a" style="left:802px;top:336px;width:101px;height:33px;border:2px solid #e0191e"></div>
<div class="a" style="left:717px;top:387px;width:236px;height:1px;background:#d0d0d0"></div>
<div class="a" style="left:717px;top:388px;width:236px;height:15px;background:#f4f4f4"></div>
<div class="a" style="left:717px;top:403px;width:236px;height:1px;background:#d0d0d0"></div>
<div class="t" style="left:729px;top:390.5px;font-size:8.2px;margin-top:0">Behavior in Simulink Editor</div>
<div class="a" style="left:717px;top:404px;width:236px;height:62px;background:#f4f4f4"></div>


<!-- status bar -->
<div class="a" style="left:0;top:466px;width:954px;height:10px;background:#e8e8e8;border-top:1px solid #d0d0d0"></div>
<div class="t" style="left:578px;top:467.5px;font-size:8px;color:#222;margin-top:0">X: -10 Y: 41</div>
<div class="a" style="left:626px;top:469px;width:1px;height:6px;background:#999"></div>
<div class="t" style="left:670px;top:467.5px;font-size:7.7px;color:#222;margin-top:0">100%</div>

<div class="a" style="left:0;top:476px;width:954px;height:2px;background:linear-gradient(#3d6e3d 0,#3d6e3d 40%,#1a221a 60%)"></div>

<!-- ICONS overlay -->
<svg class="a" style="left:0;top:0" width="954" height="478">
<!-- title icon -->
<path d="M5.5,2.5 L9,4.3 L5.5,6.2 Z" fill="#2d8fe0"/>
<circle cx="11.8" cy="8" r="2.3" fill="#d42a1e"/>
<circle cx="10.8" cy="7" r="0.9" fill="#f07a3a"/>
<!-- window controls -->
<line x1="882" y1="6.5" x2="888" y2="6.5" stroke="#e8e8e8" stroke-width="1"/>
<rect x="909.5" y="3.5" width="6.5" height="5.5" rx="1.2" fill="none" stroke="#e8e8e8" stroke-width="1"/>
<path d="M938,3.5 L944.5,9 M944.5,3.5 L938,9" stroke="#e8e8e8" stroke-width="1"/>
<!-- quick access bar -->
<path d="M798,21.5 L803,15.8 L949,15.8 L949,27.6 L803,27.6 Z" fill="#6d91b8"/>
<g opacity="0.55">
<rect x="809" y="18" width="8" height="6" rx="1" fill="none" stroke="#cfd8e2" stroke-width="1"/>
<rect x="813" y="20.5" width="6" height="4" rx="1" fill="#b9c9da" stroke="#cfd8e2" stroke-width="0.8"/>
</g>
<rect x="826.5" y="17.5" width="10.5" height="8.5" rx="1" fill="#f4f4f4" stroke="#3a3a3a" stroke-width="1"/>
<path d="M828,19 L835.5,24.5 M835.5,19 L828,24.5" stroke="#555" stroke-width="0.9"/>
<rect x="843.5" y="17.8" width="6.5" height="5.5" rx="0.8" fill="#e6e9ee" stroke="#888" stroke-width="0.6"/>
<rect x="846.5" y="20.3" width="7" height="6" rx="0.8" fill="#fafafa" stroke="#555" stroke-width="0.8"/>
<g opacity="0.5"><rect x="862" y="18" width="9" height="8" rx="1.5" fill="#9fb5cc" stroke="#d0d8e0" stroke-width="1"/></g>
<rect x="879" y="17.5" width="9" height="8" fill="#bdbdbd" stroke="#e0e0e0" stroke-width="0.6"/>
<rect x="884" y="17" width="5.5" height="5" fill="#e8e8e8"/>
<circle cx="887.5" cy="23.5" r="2.6" fill="#3aa63a"/>
<path d="M886.3,23.5 L887.5,22.2 L888.7,23.5" stroke="#ffe04a" stroke-width="1" fill="none"/>
<path d="M899,21.5 L902,18.8 L902,20.5 Q907,20.2 907,23.5 Q906.5,26 903.5,26" fill="none" stroke="#9fb3c8" stroke-width="1.5"/>
<path d="M923.5,21.5 L920.5,18.8 L920.5,20.5 Q915.5,20.2 915.5,23.5 Q916,26 919,26" fill="none" stroke="#9fb3c8" stroke-width="1.5"/>
<circle cx="936.6" cy="21.4" r="4.8" fill="#ffffff" stroke="#2f6fb4" stroke-width="0.8"/>
<text x="936.6" y="24.4" font-family="Liberation Sans" font-weight="bold" font-size="8" text-anchor="middle" fill="#222">?</text>
</svg>


<!-- TOOLBAR ICONS -->
<svg class="a" style="left:0;top:0" width="954" height="478">
<!-- save mask -->
<rect x="16.5" y="36.5" width="12.5" height="9.5" rx="2" fill="#fafafa" stroke="#c4c4c4" stroke-width="1"/>
<ellipse cx="20.3" cy="40.8" rx="1.6" ry="1.2" fill="none" stroke="#8a8a8a" stroke-width="0.9"/><ellipse cx="24.2" cy="40.8" rx="1.6" ry="1.2" fill="none" stroke="#8a8a8a" stroke-width="0.9"/>
<rect x="22.5" y="41" width="9.5" height="7" rx="1" fill="#a9cdf0"/>
<rect x="24.5" y="41.8" width="5.5" height="2" fill="#eef6fd"/>
<rect x="25" y="45.3" width="4.5" height="2.7" fill="#cfe3f7"/>
<!-- checkbox -->
<rect x="53.5" y="48.5" width="10" height="8" rx="1" fill="#fff" stroke="#8a8a8a" stroke-width="1"/>
<path d="M55.5,52.2 L57.8,54.3 L61.5,50" fill="none" stroke="#1a1a1a" stroke-width="1.3"/>
<!-- save as -->
<rect x="53" y="63" width="8.5" height="6.5" rx="1" fill="#8f8f8f"/>
<rect x="54" y="67" width="6.5" height="2.5" fill="#c8c8c8"/>
<rect x="55.5" y="61" width="8.5" height="4.5" rx="1.5" fill="#5b9ad6" stroke="#3c78b8" stroke-width="0.5"/>
<rect x="57" y="62.5" width="5.5" height="1.3" fill="#d8e8f8"/>
<!-- import arrow -->
<path d="M205.5,36 Q214,35.5 215.2,42 L219.5,42 L212.5,48.5 L205.5,42 L209.5,42 Q209,39 205.5,39 Z" fill="#aee59c" stroke="#38a83a" stroke-width="1"/>
<path d="M210,65 L214.5,65 L212.2,67.5 Z" fill="#333"/>
<!-- delete icon -->
<path d="M237,38.5 L239,36.5 L249,36.5 L251,38.5 L249,40.5 L239,40.5 Z" fill="#e8e8e8" stroke="#888" stroke-width="0.8"/>
<rect x="238.5" y="37" width="10" height="7.5" fill="#dfeaf5" stroke="#777" stroke-width="0.8"/>
<path d="M239.5,44 L242,40 L244,42.5 L245.5,41 L247.5,44 Z" fill="#2e9a3e"/>
<circle cx="246" cy="38.8" r="1.1" fill="#5aa0e0"/>
<rect x="243.5" y="41.5" width="8.5" height="7" rx="1" fill="#f06b6b" stroke="#c63a3a" stroke-width="0.8"/>
<path d="M245.5,43.2 L250,47 M250,43.2 L245.5,47" stroke="#8b1c1c" stroke-width="0.9"/>
<!-- B I U -->
<g fill="none" stroke="#d0d0d0" stroke-width="1">
<rect x="266.5" y="41" width="10" height="8.5" rx="1.5"/>
<rect x="281.5" y="41" width="10" height="8.5" rx="1.5"/>
<rect x="296.5" y="41" width="10" height="8.5" rx="1.5"/>
</g>
<text x="271.5" y="48.3" font-family="Liberation Sans" font-size="8" text-anchor="middle" fill="#c8c8c8">B</text>
<path d="M288,42.5 L285,48" stroke="#c8c8c8" stroke-width="1"/>
<path d="M299.5,42.5 V46 Q301.5,48.5 303.5,46 V42.5 M299,48.2 h5" fill="none" stroke="#c8c8c8" stroke-width="0.9"/>
<!-- stroke -->
<rect x="312.5" y="42.3" width="8" height="3.2" fill="#f3f3f3" stroke="#9a9a9a" stroke-width="0.8"/>
<path d="M317.5,46.3 L321.8,41.8 L323.2,43 L318.9,47.3 L317.2,47.5 Z" fill="#f2cd4c" stroke="#9a7a2a" stroke-width="0.5"/>
<path d="M321.8,41.8 L322.8,40.8 L324.2,42 L323.2,43 Z" fill="#e04848"/>
<rect x="312.5" y="47.3" width="11" height="2.3" fill="#111"/>
<!-- fill -->
<g opacity="0.55">
<path d="M268.5,56 L272,54.3 L275,57.5 L271.5,59.3 Z" fill="#6cb0ea" stroke="#999" stroke-width="0.6"/>
<circle cx="276" cy="59.5" r="0.8" fill="#5aa0e0"/>
<rect x="266.8" y="60.5" width="10" height="2.7" rx="1.3" fill="none" stroke="#aaa" stroke-width="0.7"/>
</g>
<path d="M301.8,58.5 L304.8,58.5 L303.3,60 Z" fill="#c0c0c0"/>
<path d="M361.5,44.8 L365,44.8 L363.25,46.6 Z" fill="#333"/>
<path d="M381.5,58.3 L385,58.3 L383.25,60.1 Z" fill="#333"/>
<!-- stroke width -->
<rect x="312.3" y="54" width="11.3" height="9" rx="1.3" fill="#6a6a6a"/>
<path d="M314,56.2 h8 M314,58.5 h8 M314,60.8 h8" stroke="#d8d8d8" stroke-width="0.9"/>
<!-- group -->
<rect x="396" y="41.5" width="9.3" height="7.3" fill="#f8f8f8" stroke="#3b8ee0" stroke-width="0.9"/>
<g fill="#2f7fd0"><rect x="395" y="40.5" width="2.2" height="2.2"/><rect x="404.2" y="40.5" width="2.2" height="2.2"/><rect x="395" y="47.7" width="2.2" height="2.2"/><rect x="404.2" y="47.7" width="2.2" height="2.2"/></g>
<rect x="398.2" y="43.2" width="3.3" height="2.8" fill="none" stroke="#8a8a8a" stroke-width="0.8"/>
<rect x="400.3" y="44.8" width="3.3" height="2.8" fill="#f8f8f8" stroke="#8a8a8a" stroke-width="0.8"/>
<!-- ungroup -->
<rect x="396" y="54.5" width="9.3" height="7.3" fill="#f8f8f8" stroke="#9a9a9a" stroke-width="0.9"/>
<g fill="#8a8a8a"><rect x="395" y="53.5" width="2.2" height="2.2"/><rect x="404.2" y="53.5" width="2.2" height="2.2"/><rect x="395" y="60.7" width="2.2" height="2.2"/><rect x="404.2" y="60.7" width="2.2" height="2.2"/></g>
<rect x="398.2" y="56.2" width="3.3" height="2.8" fill="#bfe0fa" stroke="#2f7fd0" stroke-width="0.8"/>
<rect x="400.3" y="57.8" width="3.3" height="2.8" fill="#bfe0fa" stroke="#2f7fd0" stroke-width="0.8"/>
<!-- flip -->
<path d="M449.5,47 L453.5,43.2 L454.5,47 Z" fill="#9a9a9a"/>
<path d="M455,47 L455.5,43.2 L459.3,47 Z" fill="#2f7fd0"/>
<path d="M525.5,44.8 L529,44.8 L527.25,46.6 Z" fill="#333"/>
<path d="M524.5,58.3 L528,58.3 L526.25,60.1 Z" fill="#333"/>
<!-- bring forward -->
<rect x="449.5" y="54.3" width="6.5" height="5" fill="#f4f4f4" stroke="#8a8a8a" stroke-width="0.8"/>
<rect x="452.2" y="56.3" width="7.5" height="6" rx="0.5" fill="#f5e27a" stroke="#b08c3a" stroke-width="0.8"/>
<!-- align -->
<g stroke-width="0.7">
<rect x="543" y="35" width="6.5" height="3" rx="0.8" fill="#f0d45a" stroke="#b08a2a"/>
<rect x="542.5" y="38.8" width="9.3" height="3.5" rx="1" fill="#8cc8f4" stroke="#2f7fd0"/>
<line x1="542" y1="34.5" x2="542" y2="42.8" stroke="#777"/>
<rect x="558" y="35" width="4" height="7.5" rx="0.8" fill="#8cc8f4" stroke="#2f7fd0"/>
<rect x="562.8" y="35.8" width="4" height="4.2" rx="0.8" fill="#f0d45a" stroke="#b08a2a"/>
<line x1="557.5" y1="34.5" x2="567.5" y2="34.5" stroke="#777"/>
<rect x="543.5" y="48" width="6.5" height="3" rx="0.8" fill="#f0d45a" stroke="#b08a2a"/>
<rect x="542.5" y="51.8" width="9.3" height="3.5" rx="1" fill="#8cc8f4" stroke="#2f7fd0"/>
<rect x="558" y="48" width="4" height="7" rx="0.8" fill="#8cc8f4" stroke="#2f7fd0"/>
<rect x="562.8" y="49.3" width="4" height="4.3" rx="0.8" fill="#f0d45a" stroke="#b08a2a"/>
<rect x="545" y="61.2" width="6.5" height="3" rx="0.8" fill="#f0d45a" stroke="#b08a2a"/>
<rect x="542.5" y="64.7" width="9.3" height="3.5" rx="1" fill="#8cc8f4" stroke="#2f7fd0"/>
<line x1="552.3" y1="60.5" x2="552.3" y2="68.5" stroke="#777"/>
<rect x="558" y="60.3" width="4" height="7.5" rx="0.8" fill="#8cc8f4" stroke="#2f7fd0"/>
<rect x="562.8" y="63" width="4" height="4.3" rx="0.8" fill="#f0d45a" stroke="#b08a2a"/>
<line x1="557.5" y1="68.3" x2="567.5" y2="68.3" stroke="#777"/>
</g>
<!-- distribute (faded) -->
<g opacity="0.45" stroke-width="0.7">
<rect x="591.5" y="41" width="4.5" height="2" fill="#f2c898" stroke="#d8a070"/>
<rect x="589" y="43.8" width="9.5" height="2.5" rx="1.2" fill="#b8dcf8" stroke="#5aa0e0"/>
<rect x="591.5" y="47" width="4.5" height="2" fill="#f2c898" stroke="#d8a070"/>
<rect x="589" y="55.5" width="2" height="4.5" fill="#f2c898" stroke="#d8a070"/>
<rect x="592.3" y="54" width="2.8" height="7.5" rx="1.2" fill="#b8dcf8" stroke="#5aa0e0"/>
<rect x="596.3" y="55.5" width="2" height="4.5" fill="#f2c898" stroke="#d8a070"/>
</g>
<!-- dynamic port -->
<rect x="620.5" y="40" width="10.8" height="8.2" rx="1" fill="#fafafa" stroke="#9a9a9a" stroke-width="0.8"/>
<rect x="620.5" y="40" width="10.8" height="2" fill="#4a90d9"/>
<rect x="621.2" y="42.5" width="4" height="5.2" fill="#b8b8b8"/>
<path d="M669.8,58.5 L673.3,58.5 L671.55,60.2 Z" fill="#c8c8c8"/>
<!-- view all conditions -->
<rect x="741" y="36.3" width="12.5" height="9.3" rx="1.2" fill="#f4f4f4" stroke="#8a8a8a" stroke-width="0.8"/>
<path d="M743,38.5 h3 M743,41.5 h2" stroke="#888" stroke-width="1"/>
<rect x="742.5" y="42.5" width="1.8" height="2" fill="#f0c030"/>
<path d="M746,38 L749,40 L746,41.5 Z" fill="#4a90d9"/>
<rect x="747.2" y="41" width="10" height="8.2" rx="1.2" fill="#f4f4f4" stroke="#6a6a6a" stroke-width="0.9"/>
<ellipse cx="752.2" cy="45.1" rx="3.3" ry="1.9" fill="#555"/>
<circle cx="752.2" cy="45.1" r="0.9" fill="#eee"/>
<!-- preview in model -->
<rect x="792" y="36.5" width="11.5" height="9" rx="0.5" fill="#f8f8f8" stroke="#8a8a8a" stroke-width="0.8"/>
<path d="M794.8,38 L799,40.3 L794.8,42.6 Z" fill="none" stroke="#3b8ee0" stroke-width="1"/>
<rect x="798.5" y="41.5" width="4.7" height="4" fill="#e04848"/>
<circle cx="791.8" cy="43.6" r="3.3" fill="#fff" stroke="#7a7a7a" stroke-width="0.8"/>
<line x1="794" y1="46" x2="797" y2="48.5" stroke="#555" stroke-width="1.1"/>
<!-- collapse toolstrip -->
<path d="M944,74 h7" stroke="#888" stroke-width="0.9"/><path d="M944.3,78.8 L947.5,75.5 L950.7,78.8 Z" fill="#666"/>
</svg>


<!-- LEFT PANEL ICONS -->
<svg class="a" style="left:0;top:0" width="954" height="478">
<!-- header triangles & kebabs -->
<path d="M6,87 L10,87 L8,89.2 Z" fill="#555"/>
<path d="M6,279 L10,279 L8,281.2 Z" fill="#555"/>
<g fill="#555"><circle cx="227" cy="85.5" r="0.75"/><circle cx="227" cy="87.8" r="0.75"/><circle cx="227" cy="90.1" r="0.75"/>
<circle cx="227" cy="277.5" r="0.6"/><circle cx="227" cy="279.8" r="0.6"/><circle cx="227" cy="282.1" r="0.6"/></g>
<!-- search magnifier -->
<circle cx="189.7" cy="101.8" r="3.1" fill="none" stroke="#555" stroke-width="0.9"/>
<line x1="192" y1="104" x2="195.5" y2="107" stroke="#555" stroke-width="1.1"/>
<!-- list icon -->
<path d="M206,100.5 h7.3 M206,102.2 h7.3 M206,103.9 h7.3 M206,105.6 h7.3" stroke="#777" stroke-width="1"/>
<!-- grid button -->
<rect x="218.5" y="96.5" width="15" height="12.8" rx="2" fill="#e0e0e0" stroke="#a8a8a8" stroke-width="1"/>
<g fill="none" stroke="#333" stroke-width="1.1">
<rect x="222" y="100.3" width="3" height="2.5" rx="0.7"/><rect x="226.8" y="100.3" width="3" height="2.5" rx="0.7"/>
<rect x="222" y="103.8" width="3" height="2.5" rx="0.7"/><rect x="226.8" y="103.8" width="3" height="2.5" rx="0.7"/>
</g>
<!-- DRAW icons -->
<g fill="none" stroke="#444" stroke-width="0.8">
<!-- path (pen) -->
<line x1="15" y1="131.2" x2="30" y2="131.2"/>
<path d="M22.5,131.5 L18.8,139 L26.2,139 Z"/>
<line x1="22.5" y1="134" x2="22.5" y2="137"/>
<rect x="18.5" y="140.7" width="8" height="1.6"/>
<path d="M16.5,131.5 Q17,134 16.5,135.5 M28.5,131.5 Q28,134 28.5,135.5"/>
</g>
<g fill="#444"><circle cx="15" cy="131.2" r="0.9"/><circle cx="30" cy="131.2" r="0.9"/><circle cx="22.5" cy="131.2" r="1"/></g>
<line x1="58.3" y1="140.8" x2="68.8" y2="132" stroke="#444" stroke-width="0.8"/>
<line x1="97.7" y1="141.7" x2="108.5" y2="132.8" stroke="#333" stroke-width="0.9"/>
<path d="M110.2,131.3 L105.5,132.3 L108.7,135.2 Z" fill="#333"/>
<rect x="137.5" y="131.7" width="15" height="8.5" fill="none" stroke="#555" stroke-width="0.9"/>
<ellipse cx="185.8" cy="136.5" rx="6.8" ry="4" fill="none" stroke="#555" stroke-width="0.9"/>
<!-- row 2 -->
<path d="M22.8,167.3 L16.2,177 L29.4,177 Z" fill="none" stroke="#555" stroke-width="0.9"/>
<path d="M63.2,166.6 L70.3,171 L67.6,177.2 L58.8,177.2 L56.1,171 Z" fill="none" stroke="#444" stroke-width="0.9"/>
<g fill="#333"><circle cx="63.2" cy="166.6" r="0.8"/><circle cx="70.3" cy="171" r="0.8"/><circle cx="67.6" cy="177.2" r="0.8"/><circle cx="58.8" cy="177.2" r="0.8"/><circle cx="56.1" cy="171" r="0.8"/></g>
<rect x="96" y="168.7" width="15.5" height="6.5" rx="3.2" fill="none" stroke="#555" stroke-width="0.9"/>
<line x1="99.5" y1="168.8" x2="99.5" y2="175.1" stroke="#555" stroke-width="0.8"/>
<path d="M139.5,172.2 Q140.5,166.5 142.7,167.5 Q144.5,168.5 145.3,172.2 Q146.3,176.5 148.3,176.8 Q150.5,176.5 151.3,172.2" fill="none" stroke="#444" stroke-width="0.9"/>
<path d="M178,170.5 Q185.5,166.5 193,170.5" fill="none" stroke="#555" stroke-width="0.8"/>
<g fill="none" stroke="#444" stroke-width="0.8"><circle cx="178.5" cy="170.3" r="1.1"/><circle cx="185.5" cy="168.2" r="1.1"/><circle cx="192.5" cy="170.3" r="1.1"/>
<circle cx="180.3" cy="175" r="1.1"/><circle cx="190.7" cy="175" r="1.1"/>
<line x1="179" y1="171.3" x2="180" y2="173.9"/><line x1="192" y1="171.3" x2="191" y2="173.9"/></g>
<!-- INSERT icons -->
<text x="22.8" y="232.2" font-family="Liberation Sans" font-size="15" text-anchor="middle" fill="#333">A</text>
<path d="M55.5,220.5 h13.3 v3.5 l1.8,1.8 l-1.8,1.8 v4 h-13.3 Z" fill="#fff" stroke="#555" stroke-width="0.9"/>
<text x="63.5" y="225.8" font-family="Liberation Sans" font-size="4" font-style="italic" text-anchor="middle" fill="#333">xy</text>
<rect x="96" y="220.8" width="16" height="10.6" fill="#f0f0f0" stroke="#666" stroke-width="0.9"/>
<rect x="97.5" y="222.3" width="13" height="7.6" fill="#fff" stroke="#999" stroke-width="0.5"/>
<path d="M98,228 Q100.5,224.5 103,227 T108,226" fill="none" stroke="#777" stroke-width="0.7"/>
<circle cx="107.5" cy="224.5" r="1.4" fill="none" stroke="#777" stroke-width="0.7"/>
<rect x="137.3" y="219.8" width="15.5" height="12.7" fill="#fff" stroke="#444" stroke-width="0.9"/>
<text x="145.1" y="230.8" font-family="Liberation Sans" font-size="12.5" font-weight="bold" text-anchor="middle" fill="#333">&#931;</text>
<circle cx="183.8" cy="224.8" r="4.3" fill="none" stroke="#666" stroke-width="0.9"/>
<line x1="187" y1="228" x2="193" y2="232.2" stroke="#666" stroke-width="1.6"/>
<!-- element browser -->
<path d="M4,311.8 L8.2,311.8 L6.1,314 Z" fill="#555"/>
<path d="M15.6,333.6 L20.4,333.6 L18,336 Z" fill="#444"/>
<path d="M28,353.3 L33.3,353.3 L30.65,355.8 Z" fill="#555"/>
<g fill="none" stroke="#888" stroke-width="1.1">
<rect x="189" y="309.3" width="4.5" height="3.8" rx="1.3"/><rect x="194.5" y="309.3" width="4.5" height="3.8" rx="1.3"/>
<rect x="189" y="313.8" width="4.5" height="3.8" rx="1.3"/><rect x="194.5" y="313.8" width="4.5" height="3.8" rx="1.3"/>
</g>
<path d="M206.5,312 L209.5,309.5 L215,310.8 L212,313.5 Z" fill="#4a8fd8"/>
<path d="M206.5,312 L212,313.5 L212,315 L206.5,313.5 Z" fill="#666"/>
<circle cx="213.2" cy="315.2" r="3.6" fill="#3aa63a"/>
<circle cx="213.2" cy="315.2" r="1.9" fill="none" stroke="#c8f0c8" stroke-width="0.8"/>
<path d="M224,312 L227,309.5 L232.5,310.8 L229.5,313.5 Z" fill="#4a8fd8"/>
<path d="M224,312 L229.5,313.5 L229.5,315 L224,313.5 Z" fill="#666"/>
<rect x="226.5" y="312.5" width="8" height="5.3" fill="#fafafa" stroke="#888" stroke-width="0.7"/>
<path d="M228.5,313.8 L232.5,315.2 L228.5,316.7 Z" fill="#2e9a3e"/>
<!-- thumbnail content -->
<path d="M33.5,337.5 L37.8,330 L42,337.5" fill="none" stroke="#c8c8c8" stroke-width="0.5"/>
<line x1="37.8" y1="330" x2="37.8" y2="338" stroke="#ddd" stroke-width="0.5"/>
<line x1="32" y1="339" x2="43.5" y2="339" stroke="#c8c8c8" stroke-width="0.6" stroke-dasharray="1 0.5"/>
<line x1="26" y1="342.3" x2="49.5" y2="342.3" stroke="#bbb" stroke-width="0.6"/>
<!-- label icon -->
<path d="M206,410 L210.5,407.5 L212.5,410.5 L209,413 Z" fill="#fff" stroke="#777" stroke-width="0.8"/>
<circle cx="213" cy="413.6" r="3.5" fill="#4cb84c"/>
<path d="M211.5,414.2 L213,413 L214.5,414.2" fill="none" stroke="#d8f5d8" stroke-width="0.8"/>
<circle cx="226.5" cy="294.5" r="3.1" fill="none" stroke="#555" stroke-width="0.9"/>
<line x1="228.8" y1="296.7" x2="232.3" y2="299.7" stroke="#555" stroke-width="1.1"/>
<!-- status collapse -->
<path d="M4.5,468 v6.5 M9.5,468 L5.5,471.3 L9.5,474.5 Z" stroke="#999" stroke-width="0.8" fill="#bbb"/>
</svg>


<!-- CENTER/RIGHT ICONS -->
<svg class="a" style="left:0;top:0" width="954" height="478">
<!-- center header handle -->
<rect x="240" y="82" width="10" height="11" fill="#fff"/>
<g fill="#aaa"><rect x="243.6" y="84.5" width="0.8" height="5.5"/><rect x="245.6" y="84.5" width="0.8" height="5.5"/></g>
<g fill="#555"><circle cx="701" cy="85.3" r="0.75"/><circle cx="701" cy="87.6" r="0.75"/><circle cx="701" cy="89.9" r="0.75"/></g>
<line x1="335.5" y1="94" x2="335.5" y2="103.5" stroke="#333" stroke-width="1.2"/>
<!-- floating toolbar icons -->
<path d="M443.3,108 L445.3,114.8 L447.3,112.8 L450.8,116.2 L452.6,114.8 L449.2,111.6 L451.6,110.6 Z" fill="#fff" stroke="#555" stroke-width="0.8" stroke-linejoin="round"/>
<path d="M464.5,109.5 L472.5,112 L469.5,113.2 L472,115.8 L470.8,116.8 L468.3,114.3 L467,117.2 Z" fill="#444"/>
<path d="M462.8,109.5 L462.8,117" stroke="#777" stroke-width="0.7" stroke-dasharray="1 1"/>
<circle cx="463" cy="109.5" r="0.9" fill="#666"/><circle cx="471.5" cy="109.5" r="0.9" fill="#666"/>
<path d="M483.8,108.8 L489.8,114.2 M490.8,108.8 L484.8,114.2" stroke="#333" stroke-width="1"/>
<circle cx="484" cy="115.3" r="1.6" fill="#fff" stroke="#444" stroke-width="0.8"/>
<circle cx="490.6" cy="115.3" r="1.6" fill="#fff" stroke="#444" stroke-width="0.8"/>
<path d="M506.3,108.6 v3.6 M504.5,110.4 h3.6" stroke="#444" stroke-width="0.9"/>
<path d="M503.5,114.8 L505,113.6 M507.6,113.6 L509.1,114.8" fill="none" stroke="#777" stroke-width="0.7"/>
<circle cx="502.8" cy="115" r="1.4" fill="#fff" stroke="#555" stroke-width="0.8"/>
<circle cx="509.8" cy="115" r="1.4" fill="#fff" stroke="#555" stroke-width="0.8"/>
<!-- status bar icons -->
<circle cx="637" cy="472.8" r="3.5" fill="none" stroke="#666" stroke-width="0.9"/>
<line x1="635.3" y1="472.8" x2="638.7" y2="472.8" stroke="#666" stroke-width="0.9"/>
<line x1="639.6" y1="475.4" x2="641.5" y2="477" stroke="#666" stroke-width="1"/>
<circle cx="655.8" cy="472.8" r="3.5" fill="none" stroke="#666" stroke-width="0.9"/>
<path d="M654.1,472.8 h3.4 M655.8,471.1 v3.4" stroke="#666" stroke-width="0.9"/>
<line x1="658.4" y1="475.4" x2="660.3" y2="477" stroke="#666" stroke-width="1"/>
<rect x="696.5" y="469.5" width="9.5" height="7" fill="#fff" stroke="#777" stroke-width="0.9"/>
<path d="M697.5,470.5 l2,1.8 M705,470.5 l-2,1.8 M697.5,475.5 l2,-1.8 M705,475.5 l-2,-1.8" stroke="#777" stroke-width="0.9"/>
<line x1="716" y1="466" x2="716" y2="476" stroke="#d0d0d0" stroke-width="1"/>
<!-- right panel -->
<g fill="#fff"><circle cx="943.6" cy="85.3" r="0.65"/><circle cx="943.6" cy="87.6" r="0.65"/><circle cx="943.6" cy="89.9" r="0.65"/></g>
<g fill="#444">
<path d="M721.5,99.8 L724,101.9 L721.5,104 Z"/>
<path d="M721.5,115.6 L724,117.7 L721.5,119.8 Z"/>
<path d="M721.5,131.4 L724,133.5 L721.5,135.6 Z"/>
<path d="M721.5,147.6 L724,149.7 L721.5,151.8 Z"/>
<path d="M720.8,164.3 L725,164.3 L722.9,166.6 Z"/>
<path d="M721.8,393.4 L724.3,395.5 L721.8,397.6 Z"/>
</g>
<circle cx="936" cy="203.5" r="4.6" fill="#fff" stroke="#2c86dc" stroke-width="1"/>
<rect x="935.4" y="202" width="1.2" height="4.2" fill="#2c86dc"/>
<circle cx="936" cy="200.4" r="0.75" fill="#2c86dc"/>
<path d="M935.3,347.5 L938.6,344 L941.9,347.5 Z" fill="#555"/>
<line x1="935.8" y1="352" x2="941.4" y2="352" stroke="#777" stroke-width="1"/>
<path d="M935.3,356.8 L938.6,360.3 L941.9,356.8 Z" fill="#555"/>
<path d="M946,470.5 L950,472.8 L946,475 Z M950.5,470 v5.5" fill="#999" stroke="#999" stroke-width="0.6"/>
</svg>

<!-- frame borders -->
<div class="a" style="left:0;top:0;width:1px;height:478px;background:#222"></div>
<div class="a" style="left:953px;top:0;width:1px;height:478px;background:#1a1a1a"></div><div class="a" style="left:952.5px;top:0;width:0.5px;height:478px;background:#555"></div>
</body></html>
